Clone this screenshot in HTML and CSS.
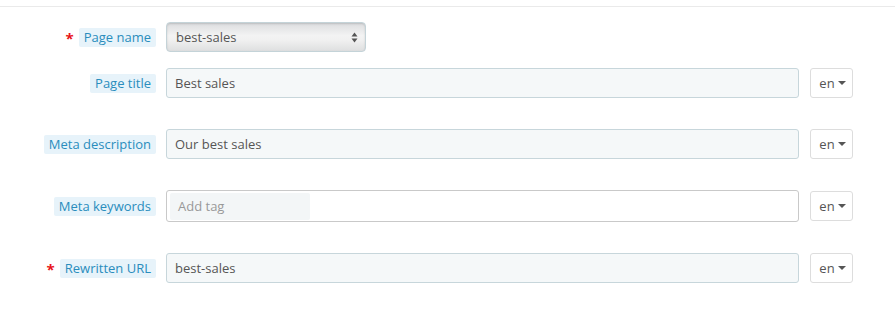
FILE: index.html
```html
<!DOCTYPE html>
<html lang="en">
<head>
    <meta charset="UTF-8">
    <title>Meta page</title>
    <link rel="stylesheet" href="styles.css">
</head>
<body>
    <div class="panel">
        <form class="form">
            <!-- Page name -->
            <div class="row row-first">
                <div class="label-col">
                    <span class="req">*</span>
                    <span class="label">Page name</span>
                </div>
                <div class="select-box">
                    <span>best-sales</span>
                    <svg class="updown" width="7" height="11" viewBox="0 0 7 11">
                        <path d="M3.5 0.5 L6.5 4.5 L0.5 4.5 Z" fill="#555"/>
                        <path d="M0.5 6.5 L6.5 6.5 L3.5 10.5 Z" fill="#555"/>
                    </svg>
                </div>
            </div>

            <div class="row">
                <div class="label-col">
                    <span class="label">Page title</span>
                </div>
                <div class="input">Best sales</div>
                <button type="button" class="lang">en <span class="caret"></span></button>
            </div>

            <div class="row row-spaced">
                <div class="label-col">
                    <span class="label">Meta description</span>
                </div>
                <div class="input">Our best sales</div>
                <button type="button" class="lang">en <span class="caret"></span></button>
            </div>

            <div class="row row-spaced">
                <div class="label-col">
                    <span class="label">Meta keywords</span>
                </div>
                <div class="input tags">
                    <span class="tag-input">Add tag</span>
                </div>
                <button type="button" class="lang">en <span class="caret"></span></button>
            </div>

            <div class="row row-spaced">
                <div class="label-col">
                    <span class="req">*</span>
                    <span class="label">Rewritten URL</span>
                </div>
                <div class="input">best-sales</div>
                <button type="button" class="lang">en <span class="caret"></span></button>
            </div>
        </form>
    </div>
</body>
</html>
```

FILE: styles.css
```css
/* Reset */
body {
    margin: 0;
    padding: 0;
    background: #fff;
    font-family: 'Open Sans', 'Liberation Sans', sans-serif;
    font-size: 13px;
    color: #555;
}

.panel {
    margin-top: 6px;
    border-top: 1px solid #eaeaea;
}

.form {
    padding-bottom: 30px;
}

.row {
    display: flex;
    align-items: center;
    margin-top: 16px;
    padding-right: 42px;
}

.row-first {
    margin-top: 15px;
}

.row-spaced {
    margin-top: 31px;
}

/* Label column */
.label-col {
    width: 156px;
    flex-shrink: 0;
    display: flex;
    justify-content: flex-end;
    align-items: center;
    margin-right: 10px;
}

.req {
    color: #e8141b;
    font-weight: bold;
    font-size: 15px;
    margin-right: 5px;
    position: relative;
    top: 1px;
}

.label {
    background: #e7f3fa;
    color: #2a8dbd;
    line-height: 18px;
    padding: 0 5px 1px;
    border-radius: 2px;
    white-space: nowrap;
}

/* Fake select */
.select-box {
    width: 200px;
    height: 30px;
    box-sizing: border-box;
    border: 1px solid #c4d3d8;
    border-radius: 4px;
    background: linear-gradient(#dcdddf, #f3f3f3 45%, #f1f1f1 60%, #dedfe0);
    box-shadow: inset 0 1px 2px rgba(0, 0, 0, 0.15);
    display: flex;
    align-items: center;
    justify-content: space-between;
    padding: 0 7px 0 9px;
}

.updown {
    display: block;
}

/* Inputs */
.input {
    flex: 1;
    height: 30px;
    box-sizing: border-box;
    border: 1px solid #c7d6db;
    border-radius: 3px;
    background: #f5f8f9;
    padding: 0 8px;
    line-height: 28px;
    color: #555;
}

.input.tags {
    height: 32px;
    background: #fff;
    border-color: #c9c9c9;
    padding: 2px 3px;
    line-height: normal;
}

.tag-input {
    display: block;
    width: 140px;
    height: 27px;
    line-height: 27px;
    box-sizing: border-box;
    background: #f3f6f7;
    color: #999;
    padding-left: 8px;
    border-radius: 2px;
}

/* Language button */
.lang {
    margin-left: 11px;
    width: 43px;
    height: 30px;
    box-sizing: border-box;
    background: #fff;
    border: 1px solid #ddd;
    border-radius: 3px;
    font-family: inherit;
    font-size: 13px;
    color: #555;
    padding: 0 0 0 2px;
    display: flex;
    align-items: center;
    justify-content: center;
}

.caret {
    display: inline-block;
    width: 0;
    height: 0;
    margin-left: 3px;
    border-left: 4px solid transparent;
    border-right: 4px solid transparent;
    border-top: 4px solid #555;
}
```
